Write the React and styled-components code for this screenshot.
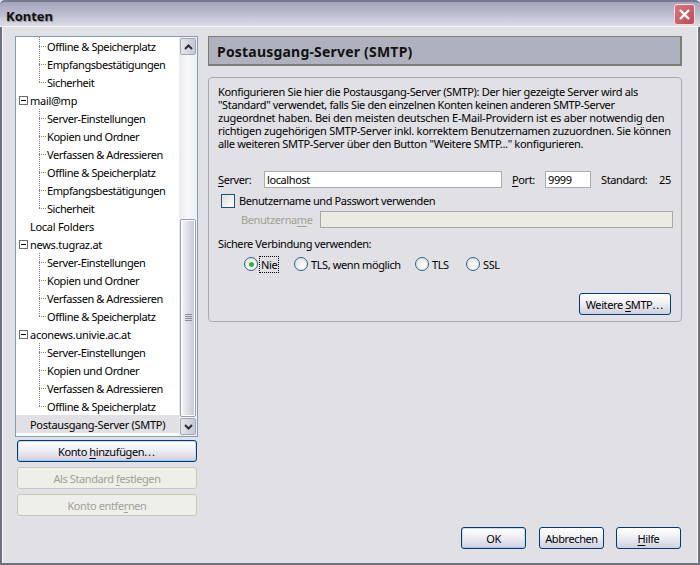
import styled, { createGlobalStyle } from 'styled-components'

const GlobalStyle = createGlobalStyle`
  html, body {
    margin: 0;
    padding: 0;
    background: #e0e0e5;
  }
  * {
    box-sizing: border-box;
  }
`

const Window = styled.div`
  width: 700px;
  height: 565px;
  display: flex;
  flex-direction: column;
  overflow: hidden;
  background: #e0e0e5;
  color: #000;
  font-family: "Noto Sans", "DejaVu Sans", sans-serif;
  font-size: 11px;
  letter-spacing: -0.4px;
`

const TitleBar = styled.div`
  height: 27px;
  flex: none;
  display: flex;
  align-items: center;
  justify-content: space-between;
  padding: 3px 5px 0 6px;
  border-top: 2px solid #77778f;
  border-bottom: 1px solid #f6f6f9;
  border-radius: 5px 5px 0 0;
  background: linear-gradient(#a4a4bc, #b4b4ca 35%, #dcdce6);
`

const TitleText = styled.div`
  font-size: 13px;
  font-weight: 700;
  letter-spacing: 0;
  color: #111;
  text-shadow: 1px 1px 1px #8d8d9d;
`

const CloseButton = styled.div`
  width: 21px;
  height: 21px;
  margin-top: -2px;
  display: flex;
  align-items: center;
  justify-content: center;
  border: 1px solid #f4dfe0;
  border-radius: 3px;
  background: linear-gradient(135deg, #d9787c, #bd4a55);
`

const Body = styled.div`
  flex: 1;
  display: flex;
  flex-direction: column;
  padding: 9px 16px 0 13px;
  border: 2px solid #6f6f80;
  border-width: 0 2px 2px;
  box-shadow: inset 1px 0 #fafafc, inset -1px 0 #fafafc;
`

const Columns = styled.div`
  flex: 1;
  display: flex;
  gap: 10px;
`

const Sidebar = styled.div`
  width: 183px;
  display: flex;
  flex-direction: column;
`

const TreeFrame = styled.div`
  height: 401px;
  display: flex;
  border: 1px solid #7f9db9;
  background: #fff;
`

const TreeList = styled.div`
  flex: 1;
  overflow: hidden;
`

const Row = styled.div`
  height: 18px;
  display: flex;
  align-items: center;
  padding-left: ${(p) => (p.$child ? '23px' : p.$toggle ? '3px' : '14px')};
  background: ${(p) => (p.$selected ? '#e0e0e5' : 'transparent')};
  letter-spacing: ${(p) => (p.$child ? '-0.42px' : '-0.28px')};
  white-space: nowrap;
`

const Branch = styled.span`
  width: 8px;
  height: 18px;
  flex: none;
  background-image:
    repeating-linear-gradient(#808080 0 1px, transparent 1px 2px),
    repeating-linear-gradient(90deg, #808080 0 1px, transparent 1px 2px);
  background-size: 1px ${(p) => (p.$last ? '9px' : '18px')}, 7px 1px;
  background-position: 0 0, 0 9px;
  background-repeat: no-repeat;
`

const Toggle = styled.span`
  width: 9px;
  height: 9px;
  flex: none;
  margin-right: 2px;
  display: flex;
  align-items: center;
  justify-content: center;
  border: 1px solid #6a6a6a;
  background: #fff;
  &::before {
    content: '';
    width: 5px;
    height: 1px;
    background: #000;
  }
`

const Scrollbar = styled.div`
  width: 18px;
  flex: none;
  display: flex;
  flex-direction: column;
  background: linear-gradient(90deg, #e9e9ef, #f8f8fa 45%, #f0f0f4);
  padding: 1px;
`

const ScrollArrow = styled.div`
  height: 17px;
  flex: none;
  display: flex;
  align-items: center;
  justify-content: center;
  border: 1px solid #fff;
  outline: 1px solid #a6a6b2;
  outline-offset: -1px;
  border-radius: 2px;
  background: linear-gradient(90deg, #e6e6ed, #c6c6d6);
`

const ScrollTrack = styled.div`
  flex: 1;
  display: flex;
  flex-direction: column;
  padding: 164px 0 1px;
`

const ScrollThumb = styled.div`
  flex: 1;
  display: flex;
  align-items: center;
  justify-content: center;
  border: 2px solid #fff;
  outline: 1px solid #9c9ca6;
  outline-offset: -1px;
  border-radius: 2px;
  background: linear-gradient(90deg, #f2f2f6, #c8c8d8);
`

const Grip = styled.div`
  width: 7px;
  height: 8px;
  background: repeating-linear-gradient(#8c8c9a 0 1px, transparent 1px 2px);
`

const SideButtons = styled.div`
  display: flex;
  flex-direction: column;
  gap: 5px;
  padding: 3px 1px 0 2px;
`

const Button = styled.button`
  width: ${(p) => p.$width || '65px'};
  height: 22px;
  margin: 0 ${(p) => p.$right || '0'} 0 0;
  padding: 0;
  font: inherit;
  letter-spacing: inherit;
  color: #000;
  border-radius: 3px;
  border: 1px solid #003c74;
  background: linear-gradient(#fff, #f2f2f6 40%, #cfd0e0);
  box-shadow: ${(p) => (p.$focus ? 'inset 0 1px #c9dcf5, inset 1px 0 #c9dcf5, inset -1px 0 #c9dcf5, inset 0 -1px #a9c0e4' : 'none')};
  &:disabled {
    color: #a1a192;
    border-color: #c9c7ba;
    background: #efefea;
    box-shadow: none;
  }
`

const Key = styled.span`
  text-decoration: underline;
  text-underline-offset: 2px;
`

const Dots = styled.span`
  letter-spacing: 1px;
`

const Main = styled.div`
  width: 474px;
  display: flex;
  flex-direction: column;
  gap: 11px;
`

const Header = styled.div`
  height: 30px;
  display: flex;
  align-items: center;
  padding: 1px 8px 0;
  border: 1px solid #7d7d72;
  border-width: 1px 2px 2px 1px;
  background: #b0b1bf;
  font-size: 14px;
  font-weight: 700;
  letter-spacing: 0.2px;
  color: #111;
`

const Panel = styled.div`
  height: 245px;
  display: flex;
  flex-direction: column;
  padding: 7px 8px 0 9px;
  border: 1px solid #a9a9b0;
  border-radius: 4px;
`

const IntroLine = styled.div`
  height: 13px;
  line-height: 13px;
  letter-spacing: ${(p) => p.$spacing}px;
  white-space: nowrap;
`

const ServerRow = styled.div`
  display: flex;
  align-items: center;
  height: 17px;
  margin-top: 21px;
`

const Label = styled.label`
  width: ${(p) => p.$width || 'auto'};
  margin-left: ${(p) => p.$left || '0'};
  color: ${(p) => (p.$off ? '#a1a192' : '#000')};
  flex: none;
`

const Input = styled.div`
  width: ${(p) => p.$width};
  height: 17px;
  flex: ${(p) => (p.$grow ? 1 : 'none')};
  display: flex;
  align-items: center;
  padding-left: 2px;
  border: 1px solid ${(p) => (p.$off ? '#a9a9a4' : '#a9abb0')};
  background: ${(p) => (p.$off ? '#ebebe4' : '#fff')};
`

const CheckRow = styled.div`
  display: flex;
  align-items: center;
  gap: 4px;
  height: 15px;
  margin: 5px 0 0 3px;
`

const Check = styled.span`
  width: 14px;
  height: 14px;
  flex: none;
  border: 1px solid #1c5180;
  background: linear-gradient(135deg, #dcdcd7, #fff);
`

const UserRow = styled.div`
  display: flex;
  align-items: center;
  height: 17px;
  margin: 3px 0 0 23px;
`

const SecureLabel = styled.div`
  margin-top: 8px;
  height: 15px;
  line-height: 15px;
`

const RadioRow = styled.div`
  display: flex;
  align-items: center;
  height: 16px;
  margin: 5px 0 0 26px;
`

const RadioItem = styled.div`
  width: ${(p) => p.$width};
  display: flex;
  align-items: center;
  gap: 2px;
`

const Radio = styled.span`
  width: 14px;
  height: 14px;
  flex: none;
  display: flex;
  align-items: center;
  justify-content: center;
  border: 1px solid #2f5f8f;
  border-radius: 50%;
  background: radial-gradient(circle at 65% 65%, #fff, #dcdcd8);
  &::before {
    content: '';
    display: ${(p) => (p.$on ? 'block' : 'none')};
    width: 5px;
    height: 5px;
    border-radius: 50%;
    background: #3aae3a;
  }
`

const RadioText = styled.span`
  outline: ${(p) => (p.$focus ? '1px dotted #000' : 'none')};
  padding: 0 1px;
`

const PanelFooter = styled.div`
  display: flex;
  justify-content: flex-end;
  margin-top: 21px;
  padding-right: 2px;
`

const Footer = styled.div`
  display: flex;
  justify-content: flex-end;
  gap: 12px;
  padding: 0 1px 14px 0;
  margin-top: -24px;
`

const treeRows = [
  ['Offline & Speicherplatz', 'child'],
  ['Empfangsbestätigungen', 'child'],
  ['Sicherheit', 'last'],
  ['mail@mp', 'toggle'],
  ['Server-Einstellungen', 'child'],
  ['Kopien und Ordner', 'child'],
  ['Verfassen & Adressieren', 'child'],
  ['Offline & Speicherplatz', 'child'],
  ['Empfangsbestätigungen', 'child'],
  ['Sicherheit', 'last'],
  ['Local Folders', 'plain'],
  ['news.tugraz.at', 'toggle'],
  ['Server-Einstellungen', 'child'],
  ['Kopien und Ordner', 'child'],
  ['Verfassen & Adressieren', 'child'],
  ['Offline & Speicherplatz', 'last'],
  ['aconews.univie.ac.at', 'toggle'],
  ['Server-Einstellungen', 'child'],
  ['Kopien und Ordner', 'child'],
  ['Verfassen & Adressieren', 'child'],
  ['Offline & Speicherplatz', 'last'],
  ['Postausgang-Server (SMTP)', 'selected'],
]

// letter spacing per line, so the line ends fall where they do in the dialog
const introLines = [
  ['Konfigurieren Sie hier die Postausgang-Server (SMTP): Der hier gezeigte Server wird als', -0.34],
  ['"Standard" verwendet, falls Sie den einzelnen Konten keinen anderen SMTP-Server', -0.37],
  ['zugeordnet haben. Bei den meisten deutschen E-Mail-Providern ist es aber notwendig den', -0.23],
  ['richtigen zugehörigen SMTP-Server inkl. korrektem Benutzernamen zuzuordnen. Sie können', -0.28],
  ['alle weiteren SMTP-Server über den Button "Weitere SMTP..." konfigurieren.', -0.33],
]

const Chevron = ({ up }) => (
  <svg width="9" height="6" viewBox="0 0 9 6">
    <path d={up ? 'M1 5 4.5 1.5 8 5' : 'M1 1 4.5 4.5 8 1'} fill="none" stroke="#2b2b35" strokeWidth="2" />
  </svg>
)

const App = () => {
  return (
    <Window>
      <GlobalStyle />
      <TitleBar>
        <TitleText>Konten</TitleText>
        <CloseButton>
          <svg width="13" height="13" viewBox="0 0 13 13">
            <path d="M2 2 11 11M11 2 2 11" stroke="#fff" strokeWidth="2.4" />
          </svg>
        </CloseButton>
      </TitleBar>
      <Body>
        <Columns>
          <Sidebar>
            <TreeFrame>
              <TreeList>
                {treeRows.map(([text, kind], i) => (
                  <Row
                    key={i}
                    $child={kind === 'child' || kind === 'last'}
                    $toggle={kind === 'toggle'}
                    $selected={kind === 'selected'}
                  >
                    {(kind === 'child' || kind === 'last') && <Branch $last={kind === 'last'} />}
                    {kind === 'toggle' && <Toggle />}
                    {text}
                  </Row>
                ))}
              </TreeList>
              <Scrollbar>
                <ScrollArrow><Chevron up /></ScrollArrow>
                <ScrollTrack>
                  <ScrollThumb><Grip /></ScrollThumb>
                </ScrollTrack>
                <ScrollArrow><Chevron /></ScrollArrow>
              </Scrollbar>
            </TreeFrame>
            <SideButtons>
              <Button $width="180px" $focus>Konto <Key>h</Key>inzufügen<Dots>...</Dots></Button>
              <Button $width="180px" disabled>Als Standard <Key>f</Key>estlegen</Button>
              <Button $width="180px" disabled>Konto entfe<Key>r</Key>nen</Button>
            </SideButtons>
          </Sidebar>
          <Main>
            <Header>Postausgang-Server (SMTP)</Header>
            <Panel>
              <div>
                {introLines.map(([text, spacing]) => (
                  <IntroLine key={text} $spacing={spacing}>{text}</IntroLine>
                ))}
              </div>
              <ServerRow>
                <Label $width="46px"><Key>S</Key>erver:</Label>
                <Input $width="238px">localhost</Input>
                <Label $left="10px" $width="33px"><Key>P</Key>ort:</Label>
                <Input $width="46px">9999</Input>
                <Label $left="10px" $width="58px">Standard:</Label>
                <Label>25</Label>
              </ServerRow>
              <CheckRow>
                <Check />
                Benutzername und Passwort verwenden
              </CheckRow>
              <UserRow>
                <Label $off $width="79px">Benutzerna<Key>m</Key>e</Label>
                <Input $off $grow />
              </UserRow>
              <SecureLabel>Sichere Verbindung verwenden:</SecureLabel>
              <RadioRow>
                <RadioItem $width="50px"><Radio $on /><RadioText $focus>Nie</RadioText></RadioItem>
                <RadioItem $width="121px"><Radio /><RadioText>TLS, wenn möglich</RadioText></RadioItem>
                <RadioItem $width="51px"><Radio /><RadioText>TLS</RadioText></RadioItem>
                <RadioItem $width="50px"><Radio /><RadioText>SSL</RadioText></RadioItem>
              </RadioRow>
              <PanelFooter>
                <Button $width="92px">Weitere <Key>S</Key>MTP<Dots>...</Dots></Button>
              </PanelFooter>
            </Panel>
          </Main>
        </Columns>
        <Footer>
          <Button $focus $right="1px">OK</Button>
          <Button>Abbrechen</Button>
          <Button><Key>H</Key>ilfe</Button>
        </Footer>
      </Body>
    </Window>
  )
}

export default App
